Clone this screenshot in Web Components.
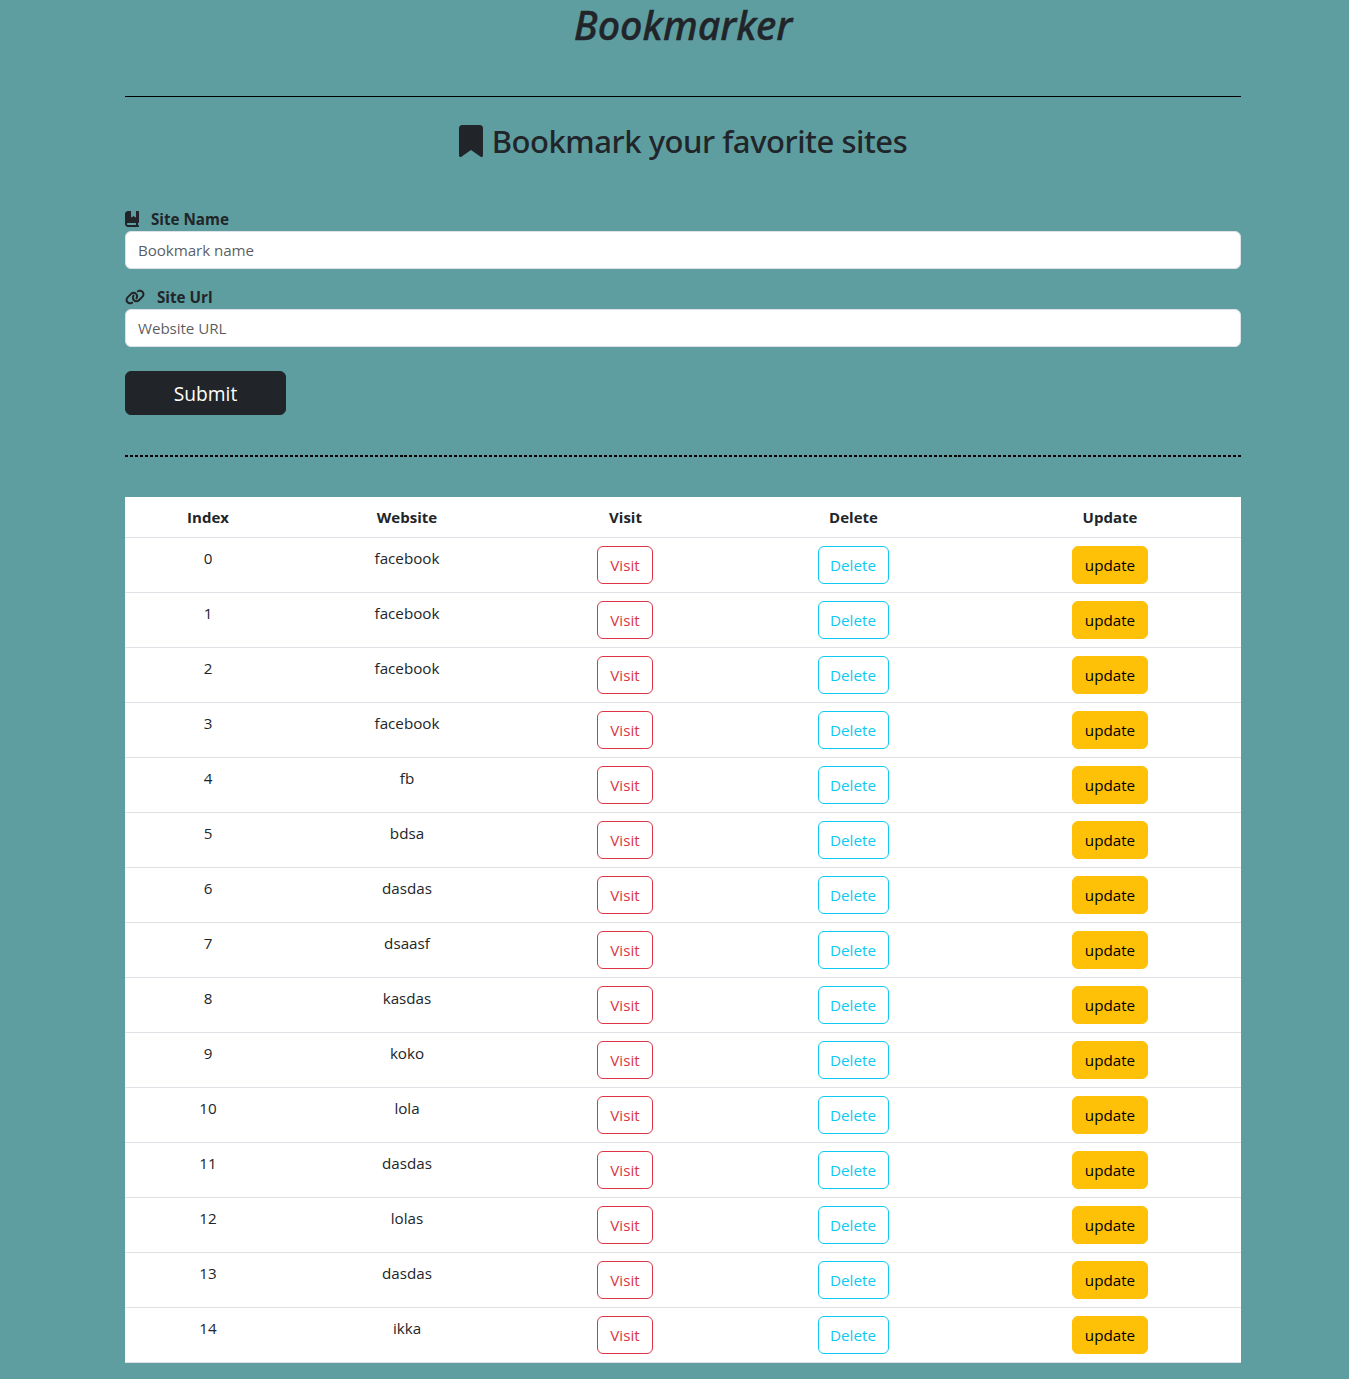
<!DOCTYPE html>
<html lang="en">
<head>
<meta charset="utf-8">
<title>Bookmarker</title>
<style>
  body { margin: 0; background: #5f9ea0; color: #212529; font: 15.2px/24px "Open Sans", "Noto Sans", sans-serif; }
</style>
</head>
<body>
<bookmark-app></bookmark-app>
<script>
const ICONS = {
  bookmark: [384, 'M0 48V487.7C0 501.1 10.9 512 24.3 512c5 0 9.9-1.5 14-4.4L192 400 345.7 507.6c4.1 2.9 9 4.4 14 4.4c13.4 0 24.3-10.9 24.3-24.3V48c0-26.5-21.5-48-48-48H48C21.5 0 0 21.5 0 48z'],
  book: [448, 'M0 96C0 43 43 0 96 0h96V190.7c0 13.4 15.5 20.9 26 12.5L272 160l54 43.2c10.5 8.4 26 .9 26-12.5V0h32 32c17.7 0 32 14.3 32 32V352c0 17.7-14.3 32-32 32v64c17.7 0 32 14.3 32 32s-14.3 32-32 32H384 96c-53 0-96-43-96-96V96zM64 416c0 17.7 14.3 32 32 32H352V384H96c-17.7 0-32 14.3-32 32z'],
  link: [640, 'M579.8 267.7c56.5-56.5 56.5-148 0-204.5c-50-50-128.8-56.5-186.3-15.4l-1.6 1.1c-14.4 10.3-17.7 30.3-7.4 44.6s30.3 17.7 44.6 7.4l1.6-1.1c32.1-22.9 76-19.3 103.8 8.6c31.5 31.5 31.5 82.5 0 114L422.3 334.8c-31.5 31.5-82.5 31.5-114 0c-27.9-27.9-31.5-71.8-8.6-103.8l1.1-1.6c10.3-14.4 6.9-34.4-7.4-44.6s-34.4-6.9-44.6 7.4l-1.1 1.6C206.5 251.2 213 330 263 380c56.5 56.5 148 56.5 204.5 0L579.8 267.7zM60.2 244.3c-56.5 56.5-56.5 148 0 204.5c50 50 128.8 56.5 186.3 15.4l1.6-1.1c14.4-10.3 17.7-30.3 7.4-44.6s-30.3-17.7-44.6-7.4l-1.6 1.1c-32.1 22.9-76 19.3-103.8-8.6C74 372 74 321 105.5 289.5L217.7 177.2c31.5-31.5 82.5-31.5 114 0c27.9 27.9 31.5 71.8 8.6 103.9l-1.1 1.6c-10.3 14.4-6.9 34.4 7.4 44.6s34.4 6.9 44.6-7.4l1.1-1.6C433.5 260.8 427 182 377 132c-56.5-56.5-148-56.5-204.5 0L60.2 244.3z']
};

const define = (name, render) => customElements.define(name, class extends HTMLElement {
  connectedCallback() {
    if (!this.shadowRoot) this.attachShadow({ mode: 'open' }).innerHTML = render(this);
  }
});

define('site-icon', el => {
  const [width, path] = ICONS[el.getAttribute('name')];
  const size = Number(el.getAttribute('size') || 16);
  return `<style>:host{display:block;flex:none}svg{display:block}</style>
    <svg width="${width / 512 * size}" height="${size}" viewBox="0 0 ${width} 512" fill="currentColor"><path d="${path}"/></svg>`;
});

define('text-field', el => `
  <style>
    :host { display: block; }
    label { display: flex; align-items: center; gap: 12px; height: 24px; font-weight: 700; }
    input { display: block; box-sizing: border-box; width: 100%; height: 38px; padding: 6px 12px; border: 1px solid #dee2e6;
      border-radius: 6px; background: #fff; color: #212529; font: inherit; letter-spacing: -.08px; }
    input::placeholder { color: rgba(33, 37, 41, .75); opacity: 1; }
  </style>
  <label for="field"><site-icon name="${el.getAttribute('icon')}"></site-icon><slot></slot></label>
  <input id="field" placeholder="${el.getAttribute('placeholder')}">`);

define('action-button', () => `
  <style>
    :host { display: inline-block; vertical-align: top; }
    button { display: block; box-sizing: border-box; width: 100%; height: 38px; padding: 0; border: 1px solid; border-radius: 6px;
      background: none; color: inherit; font: inherit; text-align: center; white-space: nowrap; }
    :host([kind=visit]) { width: 56px; color: #dc3545; }
    :host([kind=delete]) { width: 71px; color: #0dcaf0; }
    :host([kind=update]) { width: 76px; color: #000; }
    :host([kind=update]) button { background: #ffc107; border-color: #ffc107; }
    :host([kind=submit]) { width: 161px; color: #fff; font-size: 19.2px; }
    :host([kind=submit]) button { height: 44px; padding-top: 2px; background: #212529; border-color: #212529; }
  </style>
  <button type="button"><slot></slot></button>`);

define('bookmark-row', el => `
  <style>
    :host { display: grid; grid-template-columns: 166px 232px 204px 252px 262px; box-sizing: border-box; padding: 8px 0;
      border-bottom: 1px solid #dee2e6; background: #fff; text-align: center; }
    :host([head]) { font-weight: 700; font-size: 15px; }
    :host([head]) .visit, :host([head]) .delete { padding-left: 1px; }
  </style>
  ${el.hasAttribute('head')
    ? '<span>Index</span><span>Website</span><span class="visit">Visit</span><span class="delete">Delete</span><span>Update</span>'
    : `<span>${el.getAttribute('index')}</span><span>${el.getAttribute('site')}</span>
       <span><action-button kind="visit">Visit</action-button></span>
       <span><action-button kind="delete">Delete</action-button></span>
       <span><action-button kind="update">update</action-button></span>`}`);

const sites = ['facebook', 'facebook', 'facebook', 'facebook', 'fb', 'bdsa', 'dasdas', 'dsaasf', 'kasdas', 'koko', 'lola', 'dasdas', 'lolas', 'dasdas', 'ikka'];

define('bookmark-table', () => `
  <style>:host { display: block; }</style>
  <bookmark-row head></bookmark-row>
  ${sites.map((site, i) => `<bookmark-row index="${i}" site="${site}"></bookmark-row>`).join('')}`);

define('bookmark-app', () => `
  <style>
    :host { display: flex; flex-direction: column; width: 1116px; margin-left: 125px; padding-bottom: 16px; }
    h1, h2 { margin: 0; font-family: "Noto Sans", sans-serif; font-weight: 500; }
    h1 { height: 96px; font-size: 39.4px; line-height: 51px; font-style: italic; text-align: center; -webkit-text-stroke: .4px; }
    .rule { height: 1px; background: #000; }
    h2 { display: flex; justify-content: center; align-items: center; gap: 9px; margin-top: 24px; height: 40px;
      font-size: 31px; line-height: 40px; letter-spacing: -.46px; }
    text-field.name { margin-top: 46px; }
    text-field.url { margin-top: 16px; }
    .submit { margin-top: 24px; }
    .dashes { height: 2px; margin: 40px 0; background: repeating-linear-gradient(90deg, #000 0 3px, transparent 3px 4.991px); }
  </style>
  <h1>Bookmarker</h1>
  <div class="rule"></div>
  <h2><site-icon name="bookmark" size="32"></site-icon><span>Bookmark your favorite sites</span></h2>
  <text-field class="name" icon="book" placeholder="Bookmark name">Site Name</text-field>
  <text-field class="url" icon="link" placeholder="Website URL">Site Url</text-field>
  <action-button class="submit" kind="submit">Submit</action-button>
  <div class="dashes"></div>
  <bookmark-table></bookmark-table>`);
</script>
</body>
</html>
